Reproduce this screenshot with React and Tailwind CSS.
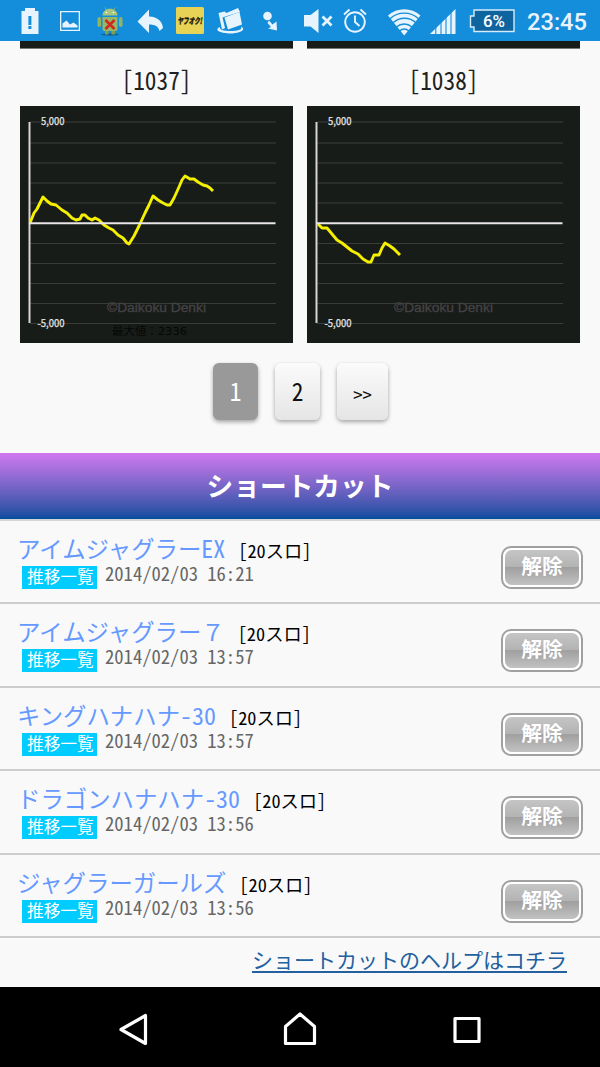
import clsx from 'clsx';

const SHORTCUTS = [
  { name: 'アイムジャグラー', suffix: 'EX', date: '2014/02/03 16:21' },
  { name: 'アイムジャグラー７', suffix: '', date: '2014/02/03 13:57' },
  { name: 'キングハナハナ', suffix: '-30', date: '2014/02/03 13:57' },
  { name: 'ドラゴンハナハナ', suffix: '-30', date: '2014/02/03 13:56' },
  { name: 'ジャグラーガールズ', suffix: '', date: '2014/02/03 13:56' },
];

// Points are in the 273x237 space of a single graph
const GRAPHS = [
  {
    id: 1037,
    max: '最大値：2336',
    points: '10,117 14,107 17,103 23,91 27,95 31,98 36,99 42,104 47,107 52,112 56,114 60,113 62,109 65,109 68,112 72,114 75,112 79,114 84,119 89,122 93,124 98,129 103,132 107,137 109,138 114,130 119,120 125,107 129,99 133,90 138,94 143,97 147,99 150,99 154,92 159,81 162,74 165,70 170,73 174,73 178,76 183,79 187,80 190,82 193,85',
  },
  {
    id: 1038,
    max: null,
    points: '11,118 15,122 20,122 25,128 30,134 35,137 40,141 45,145 51,148 56,153 61,156 64,156 67,149 72,149 75,142 78,137 83,140 87,143 93,149',
  },
];

// Latin characters at half the width of a kana
function Half({ className, children }) {
  return (
    <span className={clsx("inline-block [font-feature-settings:'hwid'] [white-space:pre]", className)}>
      {children}
    </span>
  );
}

function StatusBar() {
  return (
    <header className="h-[41px] bg-[#148ddb] shrink-0">
      <svg width="600" height="41" viewBox="0 0 600 41" fill="#e8f4fd">
        {/* battery alert */}
        <path fillRule="evenodd" d="M25 8h10v3h3.5v23h-17V11H25zM28.4 16v9h3v-9zM28.4 26v3h3v-3z" />
        {/* picture */}
        <path fillRule="evenodd" d="M60 11h20v20H60zM61.3 12.3v17.4h17.4V12.300z" />
        <path d="M62.500 27.500v-4l4-3 3.500 4 3.500-2 4 3v2z" />
        {/* android robot */}
        <ellipse cx="110" cy="34.500" rx="9" ry="1.200" fill="#0f5f94" />
        <path d="M105 7.500l1.800 3M115 7.500l-1.800 3" stroke="#8fae5c" strokeWidth="1" />
        <path d="M102.500 15.500c0-9 15-9 15 0z" fill="#a9c67c" />
        <path d="M102.500 17h15v12a2 2 0 0 1-2 2h-11a2 2 0 0 1-2-2z" fill="#97b768" />
        <rect x="97.500" y="17" width="3.500" height="10" rx="1.700" fill="#93b364" />
        <rect x="119" y="17" width="3.500" height="10" rx="1.700" fill="#93b364" />
        <path d="M105 31h3.500v3.500H105zM111.500 31h3.500v3.500h-3.500z" fill="#7d9f4f" />
        <circle cx="106.500" cy="12.500" r=".8" fill="#fff" />
        <circle cx="113.500" cy="12.500" r=".8" fill="#fff" />
        <path d="M105.500 20l9 9M114.500 20l-9 9" stroke="#cf2a20" strokeWidth="2.600" />
        {/* reply */}
        <path d="M137.500 21.500L149 9.500v7c9 .5 13.500 5 14 11.500l-3.500 3c-1-4.500-4.500-6.500-10.500-6.500V33z" />
        {/* yahoo auction */}
        <rect x="176" y="7" width="28" height="27" rx="1.500" fill="#e7d355" />
        <text x="177.500" y="24" fontSize="8.500" fontWeight="900" fill="#1d1a10" stroke="#1d1a10" strokeWidth=".3" fontStyle="italic" textLength="24.500" lengthAdjust="spacingAndGlyphs" fontFamily="'Noto Sans CJK JP', sans-serif">ヤフオク!</text>
        {/* folder */}
        <path d="M218.500 13l6-1.500 2 1.500 11.500-5 2 4-13 4-4.500 1.500 2.500 10.500-3 1.500z" />
        <path d="M224.500 17.500l15-5.500 2.500 12.500-14 5z" />
        <path d="M220 27c-7 3 1 6.500 10.500 6.500S247 29.500 241 26.500c2 3.500-4 4.500-10.500 4.500S219 30 220 27z" />
        {/* dot and arrow */}
        <circle cx="267.500" cy="16" r="4.300" />
        <path d="M269 20.500l3.500 4 4-3 .5 9-9-2 3-1.500-3.500-4z" />
        {/* muted speaker */}
        <path d="M304 15h6.500l8-6v24l-8-6.500H304z" />
        <path d="M322.500 16.500l9 9M331.500 16.500l-9 9" stroke="#e8f4fd" strokeWidth="2.800" />
        {/* alarm */}
        <g fill="none" stroke="#e8f4fd" strokeWidth="1.900">
          <circle cx="355" cy="22" r="9.800" />
          <path d="M355 15.500V22l4.500 4M344 14.500l5.500-5M366 14.500l-5.500-5" />
        </g>
        {/* wifi */}
        <path d="M388 15.500c9-8.500 23.500-8.500 32.500 0L404.200 35.500z" />
        <g fill="none" stroke="#148ddb" strokeWidth="1.400">
          <path d="M390 18.800c8-7.500 20.500-7.500 28.500 0M393 22.800c6.500-6 16.500-6 23 0M396.500 27c4.500-4 11-4 15.500 0M399.500 31c3-2.500 6.500-2.500 9.500 0" />
        </g>
        {/* signal */}
        <path d="M430 34L455.500 9v25z" />
        <path d="M435.800 24v11M441 19v16M446 14v21M451 10v25" stroke="#148ddb" strokeWidth="1.100" />
        {/* battery */}
        <path d="M474 10h40v21.500h-40v-4.500h-3.500V16h3.500z" fill="#0d649f" stroke="#d7ecfa" strokeWidth="1.400" />
        <text x="483" y="27" fontSize="17" fontWeight="500" fill="#fff" textLength="22" lengthAdjust="spacingAndGlyphs" fontFamily="Roboto, sans-serif">6%</text>
        <text x="527" y="30" fontSize="24" fontWeight="500" textLength="60" lengthAdjust="spacingAndGlyphs" fontFamily="Roboto, sans-serif">23:45</text>
      </svg>
    </header>
  );
}

function Graph({ points, max }) {
  const lines = [16, 37, 57, 77, 97, 137.500, 157.500, 177.500, 197.500, 217.500];
  return (
    <svg width="273" height="237" viewBox="0 0 273 237" className="block bg-[#181c19]">
      {lines.map(y => (
        <path key={y} d={`M10 ${y}H256`} stroke="#3a3c39" strokeWidth="1.200" />
      ))}
      <text x="87" y="206" fontSize="13" fill="#454245" stroke="#454245" strokeWidth=".3" textLength="99" lengthAdjust="spacingAndGlyphs" fontFamily="'Liberation Sans', sans-serif">©Daikoku Denki</text>
      {max && (
        <text x="92" y="229" fontSize="11" fill="#050706" textLength="75" lengthAdjust="spacingAndGlyphs" fontFamily="'DejaVu Sans', 'Noto Sans CJK JP', sans-serif">{max}</text>
      )}
      <path d="M9.500 16V217" stroke="#d5d5d3" strokeWidth="2" />
      <polyline points={points} fill="none" stroke="#f4f000" strokeWidth="2.900" strokeLinejoin="round" />
      <path d="M9 117.300H255.500" stroke="#e9e5e9" strokeWidth="2" />
      <g fill="#e4e4e2" stroke="#e4e4e2" strokeWidth=".25" fontSize="10.500" fontFamily="'Noto Sans CJK JP', sans-serif">
        <text x="21" y="19.300" textLength="23.500" lengthAdjust="spacingAndGlyphs">5,000</text>
        <text x="17.500" y="220.500" textLength="27" lengthAdjust="spacingAndGlyphs">-5,000</text>
      </g>
    </svg>
  );
}

function Pagination() {
  const button = 'h-[57px] rounded-md flex items-center justify-center shadow-[0_2px_4px_rgba(0,0,0,0.35)]';
  const light = 'bg-linear-to-b from-[#fbfbfb] to-[#e5e5e5] text-[#111]';
  return (
    <nav className="mt-5 flex pl-[213px] text-[23.3px] leading-none">
      <button className={clsx(button, 'w-[45px] bg-[#999] pb-0.5 text-white')}>
        <Half className="scale-y-110">1</Half>
      </button>
      <button className={clsx(button, light, 'ml-[17px] w-[45px] pb-0.5')}>
        <Half className="scale-y-110">2</Half>
      </button>
      <button className={clsx(button, light, 'ml-[17px] w-[51px] pt-1.5 text-[18.6px]')}>
        <Half>&gt;&gt;</Half>
      </button>
    </nav>
  );
}

function ShortcutRow({ name, suffix, date }) {
  return (
    <li className="flex h-[83.4px] justify-between border-b-2 border-[#cdcdcd] px-[17px]">
      <div className="pt-[15px]">
        <div className="flex h-[25px] items-baseline text-[23.4px] leading-6">
          <a className="text-[#6699ff]">
            {name}
            {suffix && <Half className="text-[24px]">{suffix}</Half>}
          </a>
          <span className="ml-[13px] text-[18.3px] text-black">
            <Half>[20</Half>スロ<Half>]</Half>
          </span>
        </div>
        <div className="flex h-6">
          <span className="ml-[5px] mt-[5px] h-[23px] w-[75px] bg-[#00ccff] pl-[5px] text-[16.7px] leading-[21px] text-white">
            推移一覧
          </span>
          <Half className="ml-2 text-[18.6px] leading-6 text-[#666]">{date}</Half>
        </div>
      </div>
      <button className="mt-[25px] h-[43px] w-[82px] rounded-[10px] border-2 border-[#a0a0a0] bg-white p-[2px]">
        <span className="block h-full rounded-[7px] bg-[linear-gradient(#c5c5c5,#b3b3b3_49%,#a0a0a0_50%,#c2c2c2)] text-[20.8px] font-bold leading-[30px] text-white">
          解除
        </span>
      </button>
    </li>
  );
}

function NavBar() {
  return (
    <footer className="h-20 bg-black">
      <svg width="600" height="80" viewBox="0 0 600 80" fill="none" stroke="#fff" strokeWidth="3.200" strokeLinejoin="round">
        <path d="M121 42.500L145.500 28.500V56.500z" />
        <path d="M285.500 39.500L300 27L314.500 39.500V56.500H285.500z" />
        <path d="M455 31.500H479V54.500H455z" />
      </svg>
    </footer>
  );
}

export default function App() {
  return (
    <div className="flex h-[1067px] w-[600px] flex-col overflow-hidden bg-[#f9f9f9] font-['Noto_Sans_CJK_JP',sans-serif]">
      <StatusBar />
      <main className="h-[946px]">
        <div className="flex gap-[14px] pl-5">
          {GRAPHS.map(graph => (
            <div key={graph.id} className="w-[273px]">
              <div className="h-2 border-b border-[#777] bg-[#181c19]" />
              <div className="flex h-[57px] items-center justify-center pt-[5px] text-[23.3px] leading-none text-[#222]">
                <Half className="scale-y-110">[{graph.id}]</Half>
              </div>
              <Graph points={graph.points} max={graph.max} />
            </div>
          ))}
        </div>
        <Pagination />
        <h2 className="mt-[33px] flex h-[68px] items-center justify-center border-b-2 border-[#d4d4d4] bg-linear-to-b from-[#d078f0] to-[#004c9f] bg-clip-padding pb-0.5 text-[26.7px] font-bold leading-none text-white">
          ショートカット
        </h2>
        <ul>
          {SHORTCUTS.map(item => (
            <ShortcutRow key={item.name} {...item} />
          ))}
        </ul>
        <div className="pr-[33px] pt-[7px] text-right text-[21px] leading-7">
          <a className="text-[#2260a0] underline decoration-[1.5px] underline-offset-3">ショートカットのヘルプはコチラ</a>
        </div>
      </main>
      <NavBar />
    </div>
  );
}
